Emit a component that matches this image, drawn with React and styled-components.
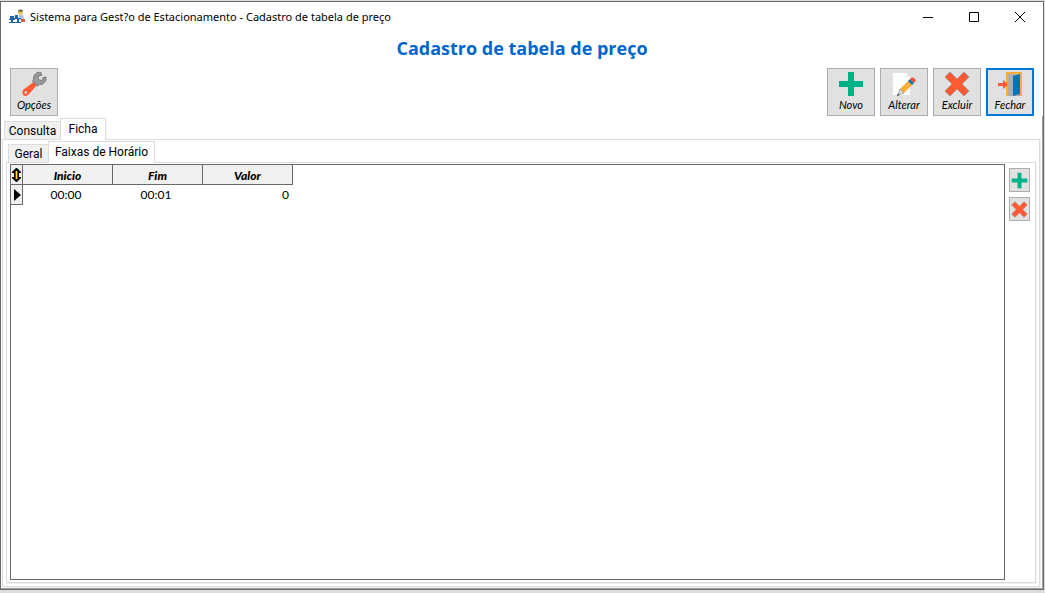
import React, { useState } from 'react';
import styled, { createGlobalStyle, css } from 'styled-components';

const Global = createGlobalStyle`
  *, *::before, *::after { box-sizing: border-box; }
  body { margin: 0; background: #dcdcdc; color: #000; font-family: Roboto, "Open Sans", sans-serif; }
  button { font: inherit; color: inherit; margin: 0; }
`;

const Window = styled.main`
  display: flex;
  flex-direction: column;
  min-height: calc(100vh - 4px);
  margin: 1px 1px 3px 0;
  background: #fff;
  border: 1px solid #6b6b6b;
`;

const TitleBar = styled.header`
  display: flex;
  align-items: center;
  height: 30px;
  padding-left: 8px;
  gap: 5px;
`;

const Caption = styled.span`
  flex: 1;
  font: 11px/16px "Noto Sans", sans-serif;
  white-space: nowrap;
`;

const CaptionButtons = styled.div`
  display: flex;
`;

const CaptionButton = styled.button`
  display: grid;
  place-items: center;
  width: 46px;
  height: 30px;
  padding: 0;
  border: 0;
  background: none;
`;

const Heading = styled.h1`
  margin: 0;
  height: 36px;
  font: 700 18px/32px "Open Sans", sans-serif;
  color: #0066cc;
  text-align: center;
`;

const Toolbar = styled.div`
  display: flex;
  justify-content: space-between;
  padding: 0 9px;
`;

const ToolGroup = styled.div`
  display: flex;
  gap: 5px;
`;

const ToolButton = styled.button`
  display: flex;
  flex-direction: column;
  align-items: center;
  width: 48px;
  height: 48px;
  padding: 2px 0 0;
  background: #e1e1e1;
  border: 1px solid #adadad;
  font: italic 11px/16px Lato, sans-serif;
  ${(p) => p.$focused && css`
    border: 2px solid #0078d7;
    padding-top: 1px;
  `}
`;

const Body = styled.div`
  flex: 1;
  display: flex;
  flex-direction: column;
  padding: 2px 1px 0;
  border: solid #a0a0a0;
  border-width: 0 1px 1px 0;
`;

const TabList = styled.div`
  display: flex;
  align-items: flex-end;
  padding-left: 2px;
`;

const Tab = styled.button`
  position: relative;
  height: ${(p) => (p.$active ? 22 : 18)}px;
  width: ${(p) => p.$width}px;
  padding: ${(p) => (p.$active ? '0 0 2px' : '0')};
  border: 1px solid #dcdcdc;
  border-bottom: 0;
  background: ${(p) => (p.$active ? '#fff' : '#f0f0f0')};
  margin-bottom: ${(p) => (p.$active ? -1 : 0)}px;
  font: 12px/18px Roboto, sans-serif;
  white-space: nowrap;
  & + & { margin-left: -1px; }
`;

const Sheet = styled.section`
  flex: 1;
  display: flex;
  flex-direction: column;
  border: 1px solid #dcdcdc;
  box-shadow: 1px 1px 0 #f0f0f0;
  margin: 0 1px 1px 0;
  padding: ${(p) => (p.$inner ? '1px 5px 2px 3px' : '1px 2px 2px 3px')};
`;

const Editor = styled.div`
  flex: 1;
  display: flex;
  gap: 4px;
`;

const GridFrame = styled.div`
  flex: 1;
  border: 1px solid #696969;
`;

const Grid = styled.table`
  table-layout: fixed;
  width: 282px;
  border-spacing: 0;
  font: 12px/15px Lato, sans-serif;
`;

const cell = css`
  height: 20px;
  text-align: ${(p) => p.$align || 'center'};
`;

const Head = styled.th`
  ${cell}
  padding: 2px 0 0;
  width: ${(p) => p.$width}px;
  background: #f0f0f0;
  border: solid #696969;
  border-width: 0 1px 1px 0;
  font-weight: 900;
  font-style: italic;
`;

const Cell = styled.td`
  ${cell}
  padding: 0 4px 2px 0;
`;

const Marker = styled(Head)`
  padding: 0;
  svg { display: block; margin: auto; }
`;

const SideBar = styled.div`
  display: flex;
  flex-direction: column;
  gap: 5px;
  padding-top: 4px;
`;

const SideButton = styled.button`
  display: grid;
  place-items: center;
  width: 21px;
  height: 24px;
  padding: 0;
  background: #e1e1e1;
  border: 1px solid #adadad;
`;

const Svg = ({ size = 26, box = 26, children }) => (
  <svg width={size} height={size} viewBox={`0 0 ${box} ${box}`} aria-hidden="true">{children}</svg>
);

const AppIcon = () => (
  <Svg size={16} box={16}>
    <path d="M10 6h4l1 3-2 2h-3z" fill="#a9c6df" />
    <path d="M1 7h4v3h1v1H4v2h2v1H0v-1h2v-2H0v-1h1z" fill="#1f62a8" />
    <path d="M6 6h3v3h3v1h-2v3h2v1H6v-1h2v-3H5V9h1z" fill="#1f62a8" />
    <circle cx="11.500" cy="3.500" r="2.300" fill="#e5bd40" />
    <path d="M9 2.500V1.500Q11.500-.5 14 1.500V2.500z" fill="#64605a" />
    <path d="M12 10h4v3h-4z" fill="#d55b40" />
  </Svg>
);

const Wrench = () => (
  <Svg>
    <path d="M14 10 17 13 7 24Q4.500 26 2 24 .5 21 2 19Z" fill="#ff5a33" />
    <circle cx="4.800" cy="21.500" r="1.300" fill="#e1e1e1" />
    <path d="M20 1.500C16 .5 12 3.500 12.500 8.500L11.500 10.500 16.500 15 18.500 13.500C22.500 14 25.500 10.500 25 6L22 6.500 21.500 9.500 18.500 9 17 7.500 17.500 5 20.500 4.500Z" fill="#999" stroke="#707070" strokeWidth=".9" />
  </Svg>
);

const Plus = ({ size }) => (
  <Svg size={size}><path d="M10 1h6v9h9v6h-9v9h-6v-9H1v-6h9z" fill="#00b188" /></Svg>
);

const Cross = ({ size }) => (
  <Svg size={size}>
    <path d="M6 1 13 8 20 1 25 6 18 13 25 20 20 25 13 18 6 25 1 20 8 13 1 6Z" fill="#ff5a33" stroke="#9a8179" strokeWidth=".7" />
  </Svg>
);

const Pencil = () => (
  <Svg>
    <path d="M2 2H15L19 6V24H2Z" fill="#fff" />
    <path d="M15 2V6H19Z" fill="#ececec" />
    <path d="M9 18 18 9 22 13 13 22Z" fill="#ffad38" />
    <path d="M9 18 13 22 6.500 24.500Z" fill="#e6dccb" stroke="#8a8a8a" strokeWidth=".7" />
    <path d="M6 25 7 22.500 8.500 24Z" fill="#444" />
    <path d="M17 10 19 8 23 12 21 14Z" fill="#0077bb" />
    <path d="M19 8Q21 5.500 23.500 7.500T23 12Z" fill="#ee5136" />
  </Svg>
);

const Door = () => (
  <Svg>
    <path d="M9 1H25V25H9Z" fill="#ffad38" />
    <path d="M11 3H23V25H11Z" fill="#adadad" />
    <path d="M16 5 23 3V23L16 25Z" fill="#0075b9" />
    <path d="M1 12H6V9L11 13.500 6 18V15H1Z" fill="#ff5a33" />
  </Svg>
);

const SortMark = () => (
  <svg width="9" height="15" viewBox="0 0 9 15" aria-hidden="true">
    <path d="M4 1h1l4 4v1H7v4h2v1l-4 4H4l-4-4v-1h2V6H0V5z" fill="#000" />
    <path d="M3 4h3v8H3z" fill="#b3201a" />
    <path d="M4 4h1v8H4z" fill="#fff200" />
  </svg>
);

const RowMark = () => (
  <svg width="9" height="12" viewBox="0 0 9 12" aria-hidden="true"><path d="M2 0 9 6 2 12Z" /></svg>
);

const captionShapes = [
  ['Minimizar', 'M0 5.500H10'],
  ['Maximizar', 'M.5 .5H9.500V9.500H.5Z'],
  ['Fechar janela', 'M0 0 10 10M10 0 0 10'],
];

const columns = ['Inicio', 'Fim', 'Valor'];

export default function App() {
  const [mainTab, setMainTab] = useState('Ficha');
  const [subTab, setSubTab] = useState('Faixas de Horário');
  const tabs = (items, current, choose) => items.map(([name, width]) => (
    <Tab key={name} type="button" role="tab" aria-selected={name === current} $active={name === current} $width={width} onClick={() => choose(name)}>
      {name}
    </Tab>
  ));

  return (
    <>
      <Global />
      <Window>
        <TitleBar>
          <AppIcon />
          <Caption>Sistema para Gest?o de Estacionamento - Cadastro de tabela de preço</Caption>
          <CaptionButtons>
            {captionShapes.map(([label, d]) => (
              <CaptionButton key={label} aria-label={label}>
                <svg width="10" height="10" viewBox="0 0 10 10" aria-hidden="true"><path d={d} fill="none" stroke="#000" /></svg>
              </CaptionButton>
            ))}
          </CaptionButtons>
        </TitleBar>
        <Heading>Cadastro de tabela de preço</Heading>
        <Toolbar>
          <ToolButton><Wrench />Opções</ToolButton>
          <ToolGroup>
            <ToolButton><Plus />Novo</ToolButton>
            <ToolButton><Pencil />Alterar</ToolButton>
            <ToolButton><Cross />Excluir</ToolButton>
            <ToolButton $focused><Door />Fechar</ToolButton>
          </ToolGroup>
        </Toolbar>
        <Body>
          <TabList role="tablist">
            {tabs([['Consulta', 57], ['Ficha', 46]], mainTab, setMainTab)}
          </TabList>
          <Sheet>
            <TabList role="tablist">
              {tabs([['Geral', 41], ['Faixas de Horário', 107]], subTab, setSubTab)}
            </TabList>
            <Sheet $inner>
              <Editor>
                <GridFrame>
                  <Grid>
                    <thead>
                      <tr>
                        <Marker as="td" $width={12}><SortMark /></Marker>
                        {columns.map((name) => <Head key={name} $width={90} scope="col">{name}</Head>)}
                      </tr>
                    </thead>
                    <tbody>
                      <tr>
                        <Marker as="td" $width={12}><RowMark /></Marker>
                        <Cell>00:00</Cell>
                        <Cell>00:01</Cell>
                        <Cell $align="right">0</Cell>
                      </tr>
                    </tbody>
                  </Grid>
                </GridFrame>
                <SideBar>
                  <SideButton aria-label="Adicionar faixa"><Plus size={17} /></SideButton>
                  <SideButton aria-label="Remover faixa"><Cross size={17} /></SideButton>
                </SideBar>
              </Editor>
            </Sheet>
          </Sheet>
        </Body>
      </Window>
    </>
  );
}
